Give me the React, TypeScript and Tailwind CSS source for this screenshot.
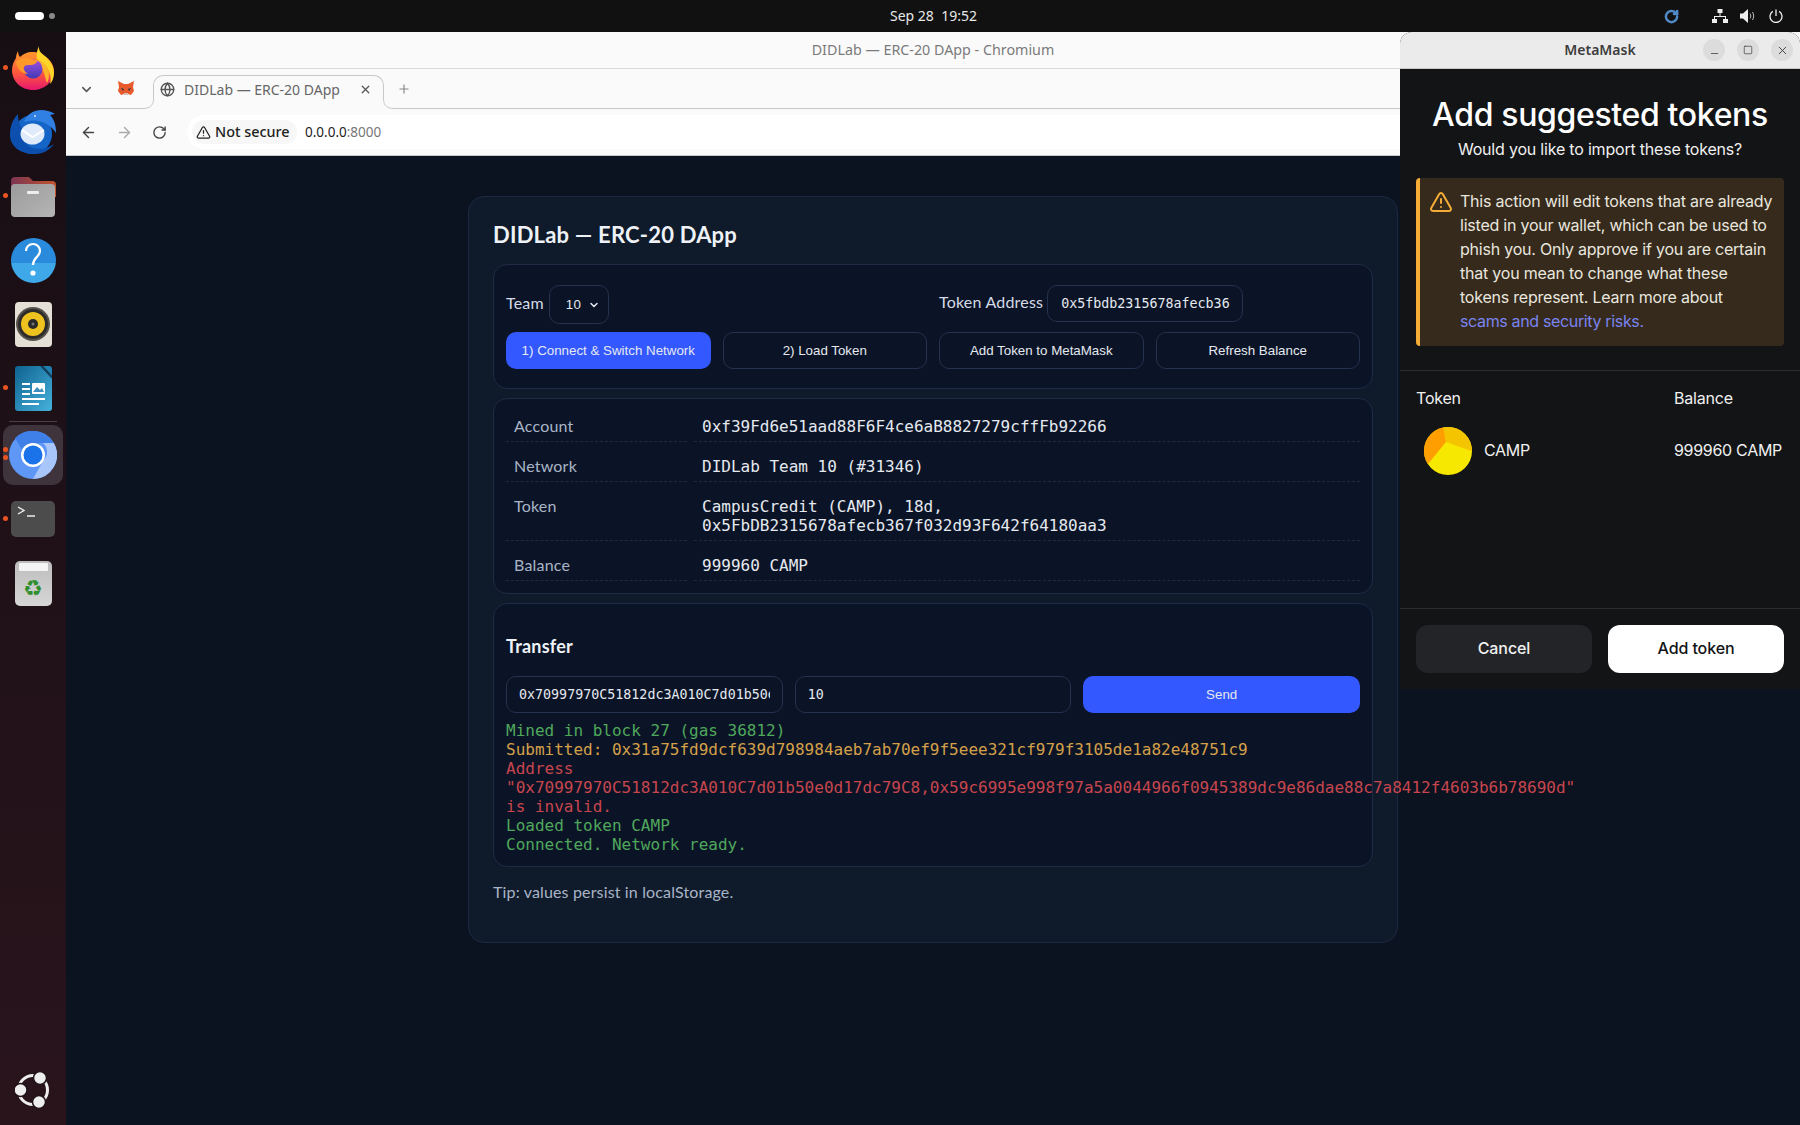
import { ArrowLeft, ArrowRight, ChevronDown, Globe, Minus, Plus, RotateCw, Square, TriangleAlert, X } from "lucide-react";
import type { ReactNode } from "react";

const pageFont = "font-['Lato','Noto_Sans',sans-serif]";
const monoFont = "font-['DejaVu_Sans_Mono',monospace]";
const interFont = "font-['Inter',sans-serif]";

const FirefoxIcon = () => (
  <svg width="44" height="44" viewBox="0 0 44 44">
    <defs>
      <linearGradient id="ffa" x1="0.5" y1="0" x2="0.5" y2="1">
        <stop offset="0" stopColor="#ff9a2a" />
        <stop offset="0.55" stopColor="#ff5a3c" />
        <stop offset="1" stopColor="#e6176f" />
      </linearGradient>
      <linearGradient id="ffb" x1="0.5" y1="0" x2="0.5" y2="1">
        <stop offset="0" stopColor="#a44fe0" />
        <stop offset="1" stopColor="#3d3ab5" />
      </linearGradient>
    </defs>
    <path d="M7 5c0 3 1 5 2 6 3-3 7-5 12-5 10 0 22 8 22 19 0 11-10 19-21 19C10 44 1 35 1 24c0-5 2-9 4-12 0-3 1-5 2-7z" fill="url(#ffa)" />
    <path d="M28 0c-1 6 4 8 8 12 5 5 7 10 7 15 0 5-2 9-4 11 1-4 1-8-1-12-2-6-7-10-12-13-1-4 0-9 2-13z" fill="#ffd52a" />
    <path d="M25 13c6 2 13 8 13 16 0 3-1 6-2 8-2-5-3-15-11-24z" fill="#ffb52a" />
    <circle cx="22" cy="23" r="9.5" fill="url(#ffb)" />
    <path d="M5 16c3-3 7-5 12-4 4 1 7 3 10 2-1 3-4 5-8 5-3 0-5 0-6 2-1 2 1 5 4 7-6 0-11-5-12-12z" fill="#ff9a2a" />
  </svg>
);

const ThunderbirdIcon = () => (
  <svg width="48" height="46" viewBox="0 0 48 46">
    <path d="M5 25c0-10 8-19 19-19s19 9 19 19-8 20-19 20S5 35 5 25z" fill="#1565c8" />
    <path d="M15 13C17 6 24 1 32 1c5 0 9 1 14 4-2 0-3 1-5 1 4 4 6 10 6 18-4-6-10-11-18-12-5-1-10 0-14 1z" fill="#2f80e2" />
    <path d="M1 26C1 18 3 11 9 5c0 6 1 10 4 14-2 8 1 15 8 19 7 3 15 3 24-3-5 7-12 10-20 10C11 45 1 37 1 26z" fill="#0c4fae" />
    <circle cx="26" cy="7" r="1" fill="#cfe2fb" />
    <ellipse cx="23.5" cy="25" rx="12" ry="10.5" fill="#dfeafb" />
    <path d="M13 21l10.500 7 11.500-7" fill="none" stroke="#fff" strokeWidth="2" />
  </svg>
);

const FilesIcon = () => (
  <svg width="46" height="42" viewBox="0 0 46 42">
    <defs>
      <linearGradient id="fold" x1="0" y1="0" x2="1" y2="0">
        <stop offset="0" stopColor="#7c3452" />
        <stop offset="1" stopColor="#c2552e" />
      </linearGradient>
      <linearGradient id="fbody" x1="0" y1="0" x2="1" y2="1">
        <stop offset="0" stopColor="#9b9b9b" />
        <stop offset="1" stopColor="#b5b5b5" />
      </linearGradient>
    </defs>
    <path d="M1 6a4 4 0 0 1 4-4h14l4 4h19a4 4 0 0 1 4 4v12H1z" fill="url(#fold)" />
    <path d="M1 13a4 4 0 0 1 4-4h36a4 4 0 0 1 4 4v25a4 4 0 0 1-4 4H5a4 4 0 0 1-4-4z" fill="url(#fbody)" />
    <rect x="17" y="16" width="12" height="3" rx="1" fill="#eeeeee" />
  </svg>
);

const HelpIcon = () => (
  <div className="relative w-[45px] h-[45px] rounded-full bg-gradient-to-b from-[#2a8bdc] from-55% to-[#3ea8e8] to-55% flex items-center justify-center">
    <svg width="22" height="36" viewBox="0 0 22 36">
      <path d="M4 9c0-4 3-7 7-7s7 3 7 7c0 6-7 6-7 14" fill="none" stroke="#fff" strokeWidth="2.200" />
      <circle cx="11" cy="31" r="2.600" fill="#fff" />
    </svg>
  </div>
);

const RhythmboxIcon = () => (
  <div className="w-[37px] h-[45px] rounded-[4px] bg-[#e5e0d5] flex items-center justify-center">
    <svg width="34" height="34" viewBox="0 0 34 34">
      <circle cx="17" cy="17" r="17" fill="#56524c" />
      <circle cx="17" cy="17" r="15" fill="#2e2c2a" />
      <circle cx="17" cy="17" r="12" fill="#eec21f" />
      <circle cx="17" cy="17" r="5" fill="#2a2a2a" />
      <circle cx="17" cy="17" r="1.500" fill="#777" />
    </svg>
  </div>
);

const WriterIcon = () => (
  <svg width="37" height="45" viewBox="0 0 37 45">
    <defs>
      <linearGradient id="wr" x1="0" y1="0" x2="1" y2="1">
        <stop offset="0" stopColor="#0f628f" />
        <stop offset="1" stopColor="#45b1dc" />
      </linearGradient>
    </defs>
    <path d="M3 0h24l10 11v31a3 3 0 0 1-3 3H3a3 3 0 0 1-3-3V3a3 3 0 0 1 3-3z" fill="url(#wr)" />
    <path d="M28 0h6a3 3 0 0 1 3 3v7z" fill="#1f7fae" />
    <path d="M26 0l11 12" stroke="#0b3f60" strokeWidth="1.200" />
    <path d="M7 18h8M7 23h8M7 28h8M7 33h23M7 38h17" stroke="#fff" strokeWidth="2" />
    <rect x="17" y="17" width="13" height="11" rx="1" fill="#fff" />
    <path d="M18 26l4-5 3 3 2-2 2 4z" fill="#3c8fbd" />
  </svg>
);

const ChromiumIcon = () => (
  <svg width="48" height="48" viewBox="0 0 48 48">
    <circle cx="24" cy="24" r="24" fill="#5e97f6" />
    <path d="M24 0a24 24 0 0 1 20.800 12H24a12 12 0 0 0-11 7L6 7A24 24 0 0 1 24 0z" fill="#3f7fe8" />
    <path d="M44.800 12A24 24 0 0 1 24 48l10-18a12 12 0 0 0 0-18z" fill="#a9c6fb" />
    <circle cx="24" cy="24" r="12" fill="#fff" />
    <circle cx="24" cy="24" r="9.500" fill="#1a73e8" />
  </svg>
);

const TerminalIcon = () => (
  <div className="w-[44px] h-[36px] rounded-[5px] bg-[#4c4c4c] relative">
    <svg width="20" height="12" viewBox="0 0 20 12" className="absolute left-[6px] top-[5px]">
      <path d="M1 1l6 3.500L1 8M10 10h8" fill="none" stroke="#eee" strokeWidth="1.400" />
    </svg>
  </div>
);

const TrashIcon = () => (
  <div className="w-[37px] h-[45px] rounded-[5px] bg-gradient-to-b from-[#bdbdbd] to-[#d6d6d6] relative flex items-center justify-center">
    <div className="absolute top-[2px] left-[4px] right-[4px] h-[8px] bg-[#f4f4f4] rounded-[1px]" />
    <span className="text-[#2f8f2f] text-[22px] leading-none mt-[12px] font-['DejaVu_Sans',sans-serif]">♻</span>
  </div>
);

const UbuntuIcon = () => (
  <svg width="36" height="36" viewBox="0 0 36 36">
    <circle cx="18" cy="18" r="14.500" fill="none" stroke="#eeeeee" strokeWidth="3" />
    <circle cx="5.500" cy="18" r="6.500" fill="#eeeeee" stroke="#21121a" strokeWidth="1.500" />
    <circle cx="25" cy="6" r="6.500" fill="#eeeeee" stroke="#21121a" strokeWidth="1.500" />
    <circle cx="24" cy="30" r="6.500" fill="#eeeeee" stroke="#21121a" strokeWidth="1.500" />
  </svg>
);

const DockSlot = ({ children, dots = 0 }: { children: ReactNode; dots?: number }) => (
  <div className="relative h-16 flex items-center justify-center">
    {dots === 1 && <span className="absolute left-[3px] top-[29px] w-[5px] h-[5px] rounded-full bg-[#e95420]" />}
    {children}
  </div>
);

const Dock = () => (
  <aside className="w-[66px] shrink-0 flex flex-col pt-1 bg-gradient-to-b from-[#170e13] to-[#29141c]">
    <DockSlot dots={1}><FirefoxIcon /></DockSlot>
    <DockSlot><ThunderbirdIcon /></DockSlot>
    <DockSlot dots={1}><FilesIcon /></DockSlot>
    <DockSlot><HelpIcon /></DockSlot>
    <DockSlot><RhythmboxIcon /></DockSlot>
    <DockSlot dots={1}><WriterIcon /></DockSlot>
    <div className="h-px mx-[9px] bg-[#4a4046] mb-[3px] mt-px" />
    <div className="relative mx-[3px] mb-[2px] h-[60px] rounded-[10px] bg-[#3f343b] flex items-center justify-center">
      <span className="absolute left-[0px] top-[22px] w-[5px] h-[5px] rounded-full bg-[#e95420]" />
      <span className="absolute left-[0px] top-[30px] w-[5px] h-[5px] rounded-full bg-[#e95420]" />
      <ChromiumIcon />
    </div>
    <DockSlot dots={1}><TerminalIcon /></DockSlot>
    <DockSlot><TrashIcon /></DockSlot>
    <div className="mt-auto mb-[17px] flex justify-center"><UbuntuIcon /></div>
  </aside>
);

const TopBar = () => (
  <header className="h-8 shrink-0 bg-[#111111] flex items-center font-['Noto_Sans',sans-serif]">
    <div className="w-[890px] flex items-center pl-[15px] gap-[5px]">
      <span className="w-[29px] h-2 rounded-full bg-white" />
      <span className="w-[6px] h-[6px] rounded-full bg-[#8a8a8a]" />
    </div>
    <span className="text-[14px] text-[#e8e8e8] whitespace-pre mb-[2px]">Sep 28  19:52</span>
    <div className="ml-auto flex items-center pr-[17px]">
      <RotateCw size={15} strokeWidth={4} className="text-[#4f8ac6] mr-[33px]" />
      <svg width="16" height="14" viewBox="0 0 16 14" className="mr-[12px]" fill="#eeeeee">
        <rect x="5.500" y="0" width="5" height="4" />
        <rect x="0" y="10" width="5" height="4" />
        <rect x="11" y="10" width="5" height="4" />
        <path d="M7.500 4h1v3h5.500v3h-1V8H3v2H2V7h5.500z" />
      </svg>
      <svg width="15" height="14" viewBox="0 0 15 14" className="mr-[14px]" fill="#eeeeee">
        <path d="M0 4.500h3L8 0v14L3 9.500H0z" />
        <path d="M10 4.500c1 1.500 1 3.500 0 5M12.500 3c1.600 2.500 1.600 5.500 0 8" fill="none" stroke="#bbbbbb" strokeWidth="1" />
      </svg>
      <svg width="14" height="14" viewBox="0 0 14 14" fill="none" stroke="#eeeeee" strokeWidth="1.300">
        <path d="M7 0.500v6.500" />
        <path d="M3.800 2.400a6 6 0 1 0 6.400 0" />
      </svg>
    </div>
  </header>
);

const FoxIcon = () => (
  <svg width="16" height="15" viewBox="0 0 16 15">
    <path d="M0 0l6 3h4l6-3-1 6 1 4-3 4-3-1H6l-3 1-3-4 1-4z" fill="#e8592b" />
    <path d="M3 7l3 1-1 2zM13 7l-3 1 1 2z" fill="#233447" />
    <path d="M6 12h4v2H6z" fill="#d7c1b3" />
  </svg>
);

const TabFlare = ({ className, d }: { className: string; d: string }) => (
  <svg width="11" height="10" viewBox="0 0 11 10" className={`absolute top-[30px] ${className}`}>
    <rect width="11" height="10" fill="#fafafa" />
    <path d={d} fill="none" stroke="#c8c8c8" />
  </svg>
);

const BrowserChrome = () => (
  <div className="shrink-0 bg-[#fafafa] font-['Noto_Sans',sans-serif]">
    <div className="h-[37px] border-b border-[#d9d9d9] flex items-center justify-center text-[14.300px] text-[#7a7a7a] pb-[1px]">
      DIDLab — ERC-20 DApp - Chromium
    </div>
    <div className="h-[40px] flex items-end relative border-b border-[#c8c8c8]">
      <ChevronDown size={15} strokeWidth={2.400} className="absolute left-[13px] top-[13px] text-[#555]" />
      <div className="absolute left-[52px] top-[12px]"><FoxIcon /></div>
      <div className="absolute left-[87px] top-[6px] w-[231px] h-[34px] bg-[#fafafa] border border-b-0 border-[#c8c8c8] rounded-t-[10px] flex items-center pl-[6px] pr-[7px] pb-[7px]">
        <Globe size={15} strokeWidth={2.200} className="text-[#555]" />
        <span className="ml-[9px] text-[14px] text-[#666] flex-1">DIDLab — ERC-20 DApp</span>
        <X size={13} strokeWidth={2.400} className="text-[#555] mr-[4px]" />
      </div>
      <TabFlare className="left-[77px]" d="M0 9.500C6 9.500 10.500 7 10.500 0" />
      <TabFlare className="left-[317px]" d="M0.500 0C0.500 7 5 9.500 11 9.500" />
      <Plus size={14} strokeWidth={2} className="absolute left-[331px] top-[13px] text-[#888]" />
    </div>
    <div className="h-[47px] flex items-center border-b border-[#c9c9c9] pl-[14px]">
      <ArrowLeft size={17} strokeWidth={2} className="text-[#444]" />
      <ArrowRight size={17} strokeWidth={2} className="text-[#aaa] ml-[19px]" />
      <RotateCw size={15} strokeWidth={2.200} className="text-[#444] ml-[19px]" />
      <div className="ml-[20px] h-[34px] flex-1 bg-white rounded-l-full flex items-center pl-[5px]">
        <div className="h-6 w-[105px] rounded-full bg-[#f7f7f7] flex items-center pl-[4px] gap-[4px]">
          <TriangleAlert size={15} strokeWidth={2} className="text-[#222]" />
          <span className="text-[14.400px] font-medium text-[#222] whitespace-nowrap">Not secure</span>
        </div>
        <span className="ml-[8px] text-[13.500px] text-[#222]">0.0.0.0<span className="text-[#777]">:8000</span></span>
      </div>
    </div>
  </div>
);

const panel = "border border-[#1f2b45] rounded-[14px] bg-[#0b1426]";
const field = `border border-[#24314f] rounded-[10px] bg-[#0b1426] text-[#e5e9f0] text-[13.33px] ${monoFont}`;
const btn = "h-[37px] rounded-[10px] text-[13.33px] text-[#e5e9f0] font-['Liberation_Sans',sans-serif]";

const InfoRow = ({ label, children }: { label: string; children: ReactNode }) => (
  <div className="grid grid-cols-[181px_666px] gap-x-[7px]">
    <div className="pt-[14px] pb-[6px] px-2 border-b border-dashed border-[#1f2b45] text-[16px] leading-[19px] tracking-[0.2px] text-[#a9b4c6]">{label}</div>
    <div className={`pt-[15px] pb-[5px] px-2 border-b border-dashed border-[#1f2b45] text-[16px] leading-[19px] text-[#e5e9f0] ${monoFont}`}>{children}</div>
  </div>
);

const DappCard = () => (
  <section className={`mt-10 mx-auto w-[930px] h-[747px] rounded-[16px] border border-[#1c2942] bg-[#0f1b2b] px-6 pt-[24px] ${pageFont}`}>
    <h1 className="text-[22px] leading-[27px] pb-px tracking-[0.2px] font-bold text-[#eef2f7]">DIDLab — ERC-20 DApp</h1>
    <div className={`${panel} mt-[15px] h-[125px] px-3 pt-5`}>
      <div className="grid grid-cols-2 gap-3 items-start">
        <div className="flex items-center gap-[5px] text-[16px] tracking-[0.2px] text-[#d5dbe6]">
          <span className="mb-1">Team</span>
          <div className={`${field} w-[60px] h-[39px] flex items-center pl-4 gap-[7px] font-['Liberation_Sans',sans-serif]`}>
            <span>10</span>
            <ChevronDown size={12} strokeWidth={3} className="text-[#e5e9f0]" />
          </div>
        </div>
        <div className="flex items-center gap-[4px] text-[16px] tracking-[0.2px] text-[#d5dbe6]">
          <span className="mb-1">Token Address</span>
          <div className={`${field} tracking-normal w-[196px] h-[37px] flex items-center px-[13px]`}>0x5fbdb2315678afecb36</div>
        </div>
      </div>
      <div className="grid grid-cols-4 gap-3 mt-2">
        <button className={`${btn} bg-[#3358ff]`}>1) Connect &amp; Switch Network</button>
        <button className={`${btn} border border-[#24314f]`}>2) Load Token</button>
        <button className={`${btn} border border-[#24314f]`}>Add Token to MetaMask</button>
        <button className={`${btn} border border-[#24314f]`}>Refresh Balance</button>
      </div>
    </div>
    <div className={`${panel} mt-[9px] h-[196px] px-3 pt-[3px]`}>
      <InfoRow label="Account">0xf39Fd6e51aad88F6F4ce6aB8827279cffFb92266</InfoRow>
      <InfoRow label="Network">DIDLab Team 10 (#31346)</InfoRow>
      <InfoRow label="Token">
        CampusCredit (CAMP), 18d,
        <br />
        0x5FbDB2315678afecb367f032d93F642f64180aa3
      </InfoRow>
      <InfoRow label="Balance">999960 CAMP</InfoRow>
    </div>
    <div className={`${panel} mt-[9px] h-[264px] px-3 pt-[31px]`}>
      <h2 className="text-[18px] leading-[22px] pb-px tracking-[0.2px] font-bold text-[#eef2f7]">Transfer</h2>
      <div className="grid grid-cols-3 gap-3 mt-[18px]">
        <div className={`${field} min-w-0 h-[37px] flex items-center px-[12px]`}>
          <span className="block w-full overflow-hidden whitespace-nowrap">0x70997970C51812dc3A010C7d01b50e</span>
        </div>
        <div className={`${field} h-[37px] flex items-center px-[12px]`}>10</div>
        <button className={`${btn} bg-[#3358ff]`}>Send</button>
      </div>
      <div className={`mt-2 text-[16px] leading-[19px] whitespace-nowrap ${monoFont}`}>
        <div className="text-[#4fa85c]">Mined in block 27 (gas 36812)</div>
        <div className="text-[#d4a04a]">Submitted: 0x31a75fd9dcf639d798984aeb7ab70ef9f5eee321cf979f3105de1a82e48751c9</div>
        <div className="text-[#c7464e]">
          Address
          <br />
          "0x70997970C51812dc3A010C7d01b50e0d17dc79C8,0x59c6995e998f97a5a0044966f0945389dc9e86dae88c7a8412f4603b6b78690d"
          <br />
          is invalid.
        </div>
        <div className="text-[#4fa85c]">Loaded token CAMP</div>
        <div className="text-[#4fa85c]">Connected. Network ready.</div>
      </div>
    </div>
    <p className="mt-[15px] text-[16px] leading-[20px] tracking-[0.15px] text-[#a9b4c6]">Tip: values persist in localStorage.</p>
  </section>
);

const WinButton = ({ children }: { children: ReactNode }) => (
  <span className="w-[22px] h-[22px] rounded-full bg-[#dcdcdc] flex items-center justify-center text-[#333]">{children}</span>
);

const TokenPie = () => (
  <svg width="48" height="48" viewBox="0 0 48 48">
    <defs>
      <clipPath id="pie"><circle cx="24" cy="24" r="24" /></clipPath>
    </defs>
    <g clipPath="url(#pie)">
      <rect width="48" height="48" fill="#f6e800" />
      <path d="M22 15L4 37L-2 48V0H20z" fill="#ff9e00" />
      <path d="M22 15L19 0H50V25z" fill="#f4c400" />
    </g>
  </svg>
);

const MetaMaskWindow = () => (
  <div className={`absolute left-[1400px] top-8 w-[400px] h-[657px] flex flex-col bg-[#131416] rounded-t-[12px] overflow-hidden ${interFont}`}>
    <div className="h-[37px] shrink-0 bg-[#ebebeb] border-b border-[#c8c8c8] relative flex items-center justify-center">
      <span className="text-[14px] font-semibold text-[#3d3d3d] font-['Noto_Sans',sans-serif] mb-[2px]">MetaMask</span>
      <div className="absolute right-[7px] top-[7px] flex gap-3">
        <WinButton><Minus size={11} strokeWidth={1.600} className="mt-[6px]" /></WinButton>
        <WinButton><Square size={10} strokeWidth={1.600} /></WinButton>
        <WinButton><X size={13} strokeWidth={1.600} /></WinButton>
      </div>
    </div>
    <h2 className="mt-[26px] text-center text-[32px] leading-[40px] tracking-[-0.35px] font-medium text-white">Add suggested tokens</h2>
    <p className="mt-[2px] text-center text-[16px] leading-6 tracking-[-0.2px] text-[#f0f0f0]">Would you like to import these tokens?</p>
    <div className="mt-[17px] mx-4 h-[168px] flex bg-[#352a1c] border-l-4 border-[#f5ac37] rounded-[4px] pl-[9px] pt-[12px]">
      <TriangleAlert size={24} strokeWidth={2} className="text-[#f5ac37] shrink-0" />
      <p className="ml-[7px] -mt-px text-[16px] leading-6 tracking-[-0.22px] text-[#e9e6df] whitespace-nowrap">
        This action will edit tokens that are already
        <br />
        listed in your wallet, which can be used to
        <br />
        phish you. Only approve if you are certain
        <br />
        that you mean to change what these
        <br />
        tokens represent. Learn more about
        <br />
        <span className="text-[#7a84f0] tracking-[-0.35px]">scams and security risks.</span>
      </p>
    </div>
    <div className="mt-6 border-t border-[#2b2d31] flex-1 flex flex-col">
      <div className="px-4 pt-[15px] flex text-[16px] leading-6 tracking-[-0.2px] text-[#f0f0f0]">
        <span className="w-[258px]">Token</span>
        <span>Balance</span>
      </div>
      <div className="px-4 mt-[17px] flex items-center text-[16px] tracking-[-0.3px] text-[#f0f0f0] whitespace-nowrap">
        <span className="ml-2"><TokenPie /></span>
        <span className="ml-3 w-[190px] mb-[2px]">CAMP</span>
        <span className="mb-[2px]">999960 CAMP</span>
      </div>
    </div>
    <div className="h-[81px] shrink-0 border-t border-[#2b2d31] px-4 pt-4 grid grid-cols-2 gap-4">
      <button className="h-12 rounded-[12px] bg-[#232428] text-[16px] leading-6 pb-[2px] font-medium tracking-[-0.1px] text-[#f0f0f0]">Cancel</button>
      <button className="h-12 rounded-[12px] bg-white text-[16px] leading-6 pb-[2px] font-medium tracking-[-0.1px] text-[#131416]">Add token</button>
    </div>
  </div>
);

export default function App() {
  return (
    <div className="relative w-[1800px] h-[1125px] overflow-hidden flex flex-col bg-[#0b1220]">
      <TopBar />
      <div className="flex-1 flex min-h-0">
        <Dock />
        <div className="flex-1 flex flex-col min-w-0">
          <BrowserChrome />
          <main className="flex-1 bg-[#0b1220]">
            <DappCard />
          </main>
        </div>
      </div>
      <MetaMaskWindow />
    </div>
  );
}
